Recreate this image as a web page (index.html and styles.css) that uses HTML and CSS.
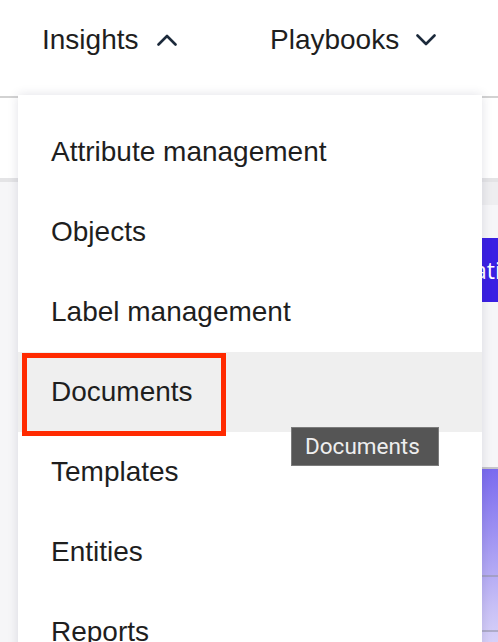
FILE: index.html
```html
<!DOCTYPE html>
<html>
<head>
<meta charset="utf-8">
<link rel="stylesheet" href="styles.css">
</head>
<body>
<div class="page">
  <header class="topnav">
    <div class="nav-item nav-insights">
      <span>Insights</span>
      <svg class="chev" width="20" height="12" viewBox="0 0 20 12"><path d="M1.5 10.5 L10 2 L18.5 10.5" fill="none" stroke="#1c2a3b" stroke-width="2.6" stroke-linecap="round" stroke-linejoin="round"/></svg>
    </div>
    <div class="nav-item nav-playbooks">
      <span>Playbooks</span>
      <svg class="chev" width="20" height="12" viewBox="0 0 20 12"><path d="M1.5 1.5 L10 10 L18.5 1.5" fill="none" stroke="#1c2a3b" stroke-width="2.6" stroke-linecap="round" stroke-linejoin="round"/></svg>
    </div>
  </header>
  <div class="subbar"></div>
  <main class="content">
    <div class="strip"></div>
    <div class="actions"><button class="primary">Relations</button></div>
    <div class="chart">
      <div class="chart-row r1"></div>
      <div class="chart-row r2"></div>
    </div>
  </main>

  <div class="dropdown">
    <div class="menu-item">Attribute management</div>
    <div class="menu-item">Objects</div>
    <div class="menu-item">Label management</div>
    <div class="menu-item hover">Documents</div>
    <div class="menu-item">Templates</div>
    <div class="menu-item">Entities</div>
    <div class="menu-item">Reports</div>
  </div>
  <div class="highlight"></div>
  <div class="tooltip">Documents</div>
</div>
</body>
</html>
```

FILE: styles.css
```css
html, body {
  margin: 0;
  padding: 0;
}
body {
  font-family: "Liberation Sans", Arial, sans-serif;
  color: #222;
  background: #fff;
}
.page {
  position: relative;
  width: 498px;
  height: 642px;
  overflow: hidden;
  background: #f6f6f8;
}
.topnav {
  height: 96px;
  background: #fff;
  display: flex;
  align-items: flex-start;
  padding-left: 42px;
}
.nav-item {
  display: flex;
  align-items: center;
  font-size: 28px;
  color: #1e1e1e;
  height: 80px;
  line-height: 80px;
}
.nav-item .chev {
  margin-left: 18px;
}
.nav-insights {
  width: 228px;
}
.nav-playbooks .chev {
  margin-left: 17px;
}
.subbar {
  height: 80px;
  background: #fff;
  border-top: 2px solid #d2d2d2;
  border-bottom: 4px solid #e4e4e6;
}
.content {
  background: #f6f6f8;
}
.strip {
  height: 23px;
  margin-left: 400px;
  background: #eeeef0;
}
.actions {
  margin-top: 33px;
  height: 64px;
  display: flex;
  padding-left: 466px;
}
.primary {
  border: none;
  background: #3a1fe3;
  color: #fff;
  font-family: "Open Sans", sans-serif;
  font-size: 23px;
  height: 64px;
  padding: 0;
  white-space: nowrap;
  flex-shrink: 0;
  width: 200px;
  text-align: left;
  text-indent: -25px;
}
.chart {
  margin-top: 165px;
  margin-left: 400px;
  border-top: 2px solid #c6c6ca;
  height: 200px;
  background: linear-gradient(#7a6aef, #c9c1f6 70%, #e2ddfa);
}
.chart-row {
  border-bottom: 2px solid rgba(150, 150, 170, 0.6);
}
.chart-row.r1 {
  height: 106px;
}
.chart-row.r2 {
  height: 53px;
}
.dropdown {
  position: absolute;
  left: 18px;
  top: 95px;
  width: 464px;
  height: 600px;
  background: #fff;
  box-shadow: 0 0 10px rgba(40, 40, 80, 0.14);
  padding-top: 17px;
  box-sizing: border-box;
}
.menu-item {
  height: 80px;
  line-height: 80px;
  padding-left: 33px;
  font-size: 28px;
  color: #1e1e1e;
  white-space: nowrap;
}
.menu-item.hover {
  background: #efefef;
}
.highlight {
  position: absolute;
  left: 22px;
  top: 353px;
  width: 204px;
  height: 83px;
  border: 5px solid #ff2a00;
  box-sizing: border-box;
}
.tooltip {
  position: absolute;
  left: 291px;
  top: 427px;
  width: 148px;
  height: 39px;
  box-sizing: border-box;
  background: #555555;
  border: 1px solid #7c7c7c;
  color: #eeeeee;
  font-family: Roboto, "Liberation Sans", sans-serif;
  font-size: 22.5px;
  line-height: 37px;
  padding-left: 13px;
}
```
